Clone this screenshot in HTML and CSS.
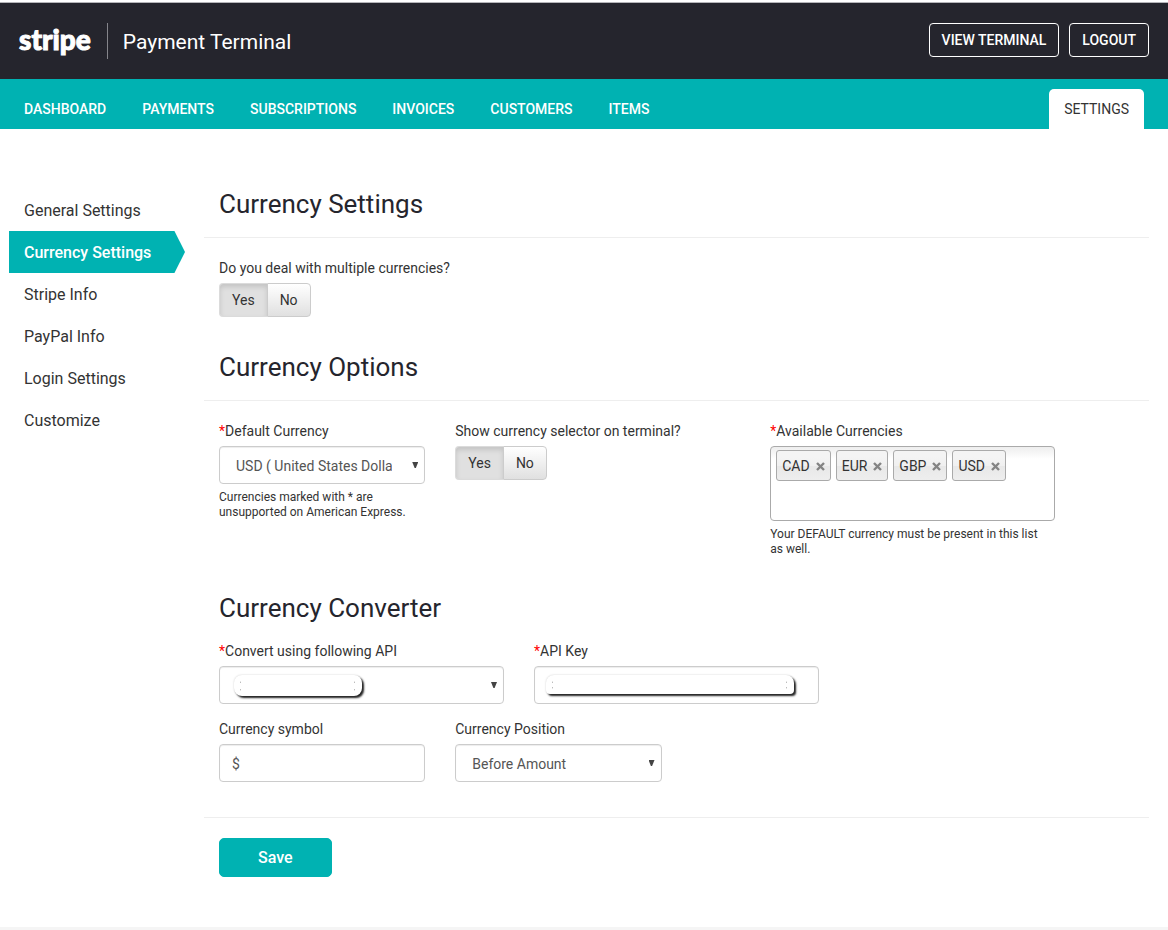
FILE: index.html
```html
<!DOCTYPE html>
<html lang="en">
<head>
<meta charset="utf-8">
<title>Currency Settings - Payment Terminal</title>
<link rel="stylesheet" href="styles.css">
</head>
<body>
<header class="topbar">
  <a class="logo" href="#">stripe</a>
  <span class="product">Payment Terminal</span>
  <div class="actions">
    <a class="outline-btn" href="#">VIEW TERMINAL</a>
    <a class="outline-btn" href="#">LOGOUT</a>
  </div>
</header>
<nav class="mainnav">
  <a href="#">DASHBOARD</a>
  <a href="#">PAYMENTS</a>
  <a href="#">SUBSCRIPTIONS</a>
  <a href="#">INVOICES</a>
  <a href="#">CUSTOMERS</a>
  <a href="#">ITEMS</a>
  <a class="tab-active" href="#">SETTINGS</a>
</nav>
<div class="layout">
  <nav class="sidenav">
    <a href="#">General Settings</a>
    <a class="current" href="#">Currency Settings</a>
    <a href="#">Stripe Info</a>
    <a href="#">PayPal Info</a>
    <a href="#">Login Settings</a>
    <a href="#">Customize</a>
  </nav>
  <main>
    <form>
      <h2 class="ruled">Currency Settings</h2>
      <fieldset class="field intro">
        <legend>Do you deal with multiple currencies?</legend>
        <div class="toggle">
          <label><input type="radio" name="multi" checked>Yes</label>
          <label><input type="radio" name="multi">No</label>
        </div>
      </fieldset>

      <h2 class="ruled">Currency Options</h2>
      <div class="grid options">
        <div class="field span3">
          <label class="caption" for="default"><span class="req">*</span>Default Currency</label>
          <div class="select"><select id="default"><option>USD ( United States Dollar )</option></select></div>
          <p class="help">Currencies marked with * are unsupported on American Express.</p>
        </div>
        <fieldset class="field span4">
          <legend>Show currency selector on terminal?</legend>
          <div class="toggle">
            <label><input type="radio" name="selector" checked>Yes</label>
            <label><input type="radio" name="selector">No</label>
          </div>
        </fieldset>
        <div class="field span4">
          <div class="caption" id="available"><span class="req">*</span>Available Currencies</div>
          <ul class="chips" aria-labelledby="available">
            <li>CAD<button type="button" aria-label="Remove CAD"><svg viewBox="0 0 9 9"><path d="M1 1l7 7M8 1L1 8"/></svg></button></li>
            <li>EUR<button type="button" aria-label="Remove EUR"><svg viewBox="0 0 9 9"><path d="M1 1l7 7M8 1L1 8"/></svg></button></li>
            <li>GBP<button type="button" aria-label="Remove GBP"><svg viewBox="0 0 9 9"><path d="M1 1l7 7M8 1L1 8"/></svg></button></li>
            <li>USD<button type="button" aria-label="Remove USD"><svg viewBox="0 0 9 9"><path d="M1 1l7 7M8 1L1 8"/></svg></button></li>
          </ul>
          <p class="help">Your DEFAULT currency must be present in this list as well.</p>
        </div>
      </div>

      <h2>Currency Converter</h2>
      <div class="grid converter">
        <div class="field span4">
          <label class="caption" for="api"><span class="req">*</span>Convert using following API</label>
          <div class="select masked"><select id="api"><option></option></select><span class="mask mask-api"></span></div>
        </div>
        <div class="field span4">
          <label class="caption" for="key"><span class="req">*</span>API Key</label>
          <div class="masked"><input id="key" type="text"><span class="mask mask-key"></span></div>
        </div>
      </div>
      <div class="grid">
        <div class="field span3">
          <label class="caption" for="symbol">Currency symbol</label>
          <input id="symbol" type="text" value="$">
        </div>
        <div class="field span3">
          <label class="caption" for="position">Currency Position</label>
          <div class="select"><select id="position"><option>Before Amount</option></select></div>
        </div>
      </div>
      <div class="submit"><button class="save" type="submit">Save</button></div>
    </form>
  </main>
</div>
<footer class="foot"></footer>
</body>
</html>
```
FILE: styles.css
```css
* { box-sizing: border-box; }
body {
  margin: 0;
  padding-top: 2px;
  min-height: 100vh;
  display: flex;
  flex-direction: column;
  background: #fff;
  color: #333;
  font: 14px/20px Roboto, "Liberation Sans", sans-serif;
}
a { text-decoration: none; color: inherit; }
h2, p, ul, fieldset { margin: 0; padding: 0; border: 0; }

.topbar {
  display: flex;
  align-items: center;
  height: 77px;
  padding: 0 19px;
  border-top: 1px solid #b5b5b9;
  background: #25252d;
  color: #fff;
}
.logo {
  padding: 0 16px 4px 0;
  border-right: 1px solid #85858b;
  font: 900 28px/32px Lato, "Open Sans", sans-serif;
  -webkit-text-stroke: 1px #fff;
}
.product { padding: 2px 0 0 15px; font-size: 21px; line-height: 28px; }
.actions { display: flex; gap: 10px; margin-left: auto; padding-bottom: 2px; }
.outline-btn {
  padding: 6px 12px;
  border: 1px solid #fff;
  border-radius: 4px;
  font-weight: 500;
}

.mainnav {
  display: flex;
  gap: 36px;
  height: 50px;
  padding: 10px 24px 0;
  background: #00b2b2;
  color: #fff;
  font-weight: 500;
  line-height: 40px;
}
.tab-active {
  margin-left: auto;
  padding: 0 15px;
  border-radius: 5px 5px 0 0;
  background: #fff;
  color: #333;
  font-weight: 400;
}

.layout { display: flex; padding: 60px 19px 50px 9px; }
.sidenav { flex: 0 0 195px; font-size: 16px; }
.sidenav a { display: block; width: 176px; padding: 2px 15px 0; line-height: 40px; }
.sidenav .current {
  background: #00b2b2;
  color: #fff;
  font-weight: 500;
  clip-path: polygon(0 0, 94% 0, 100% 50%, 94% 100%, 0 100%);
}

main { flex: 1; min-width: 0; }
h2 {
  padding: 0 15px;
  color: #25252d;
  font-size: 26px;
  line-height: 30px;
  font-weight: 400;
}
.ruled { margin-bottom: 20px; padding-bottom: 18px; border-bottom: 1px solid #eee; }
.intro { margin-bottom: 35px; }
.grid { display: grid; grid-template-columns: repeat(12, minmax(0, 1fr)); }
.field { min-width: 0; padding: 0 15px; }
.options { margin-bottom: 36px; }
.converter { margin: 18px 0 15px; }
.span3 { grid-column: span 3; }
.span4 { grid-column: span 4; }
.caption, legend { display: block; padding: 0; margin-bottom: 5px; }
.req { color: #f00; }
.help { margin-top: 6px; padding-right: 8px; font-size: 12px; line-height: 15px; }

input[type="text"], select {
  display: block;
  width: 100%;
  height: 38px;
  padding: 2px 12px 0;
  border: 1px solid #ccc;
  border-radius: 4px;
  background: #fff;
  box-shadow: inset 0 1px 1px rgba(0, 0, 0, .075);
  color: #555;
  font: inherit;
}
select { appearance: none; padding: 2px 32px 0 16px; }
.select, .masked { position: relative; }
.select::after {
  content: "";
  position: absolute;
  top: 16px;
  right: 7px;
  width: 6px;
  height: 6px;
  background: #444;
  clip-path: polygon(0 0, 100% 0, 60% 100%, 40% 100%);
  pointer-events: none;
}
.mask {
  position: absolute;
  top: 9px;
  left: 15px;
  height: 21px;
  border-radius: 8px;
  background: #fff;
  box-shadow: 2px 2px 2px #222, 0 0 2px #ccc;
}
.mask::after {
  content: "";
  position: absolute;
  inset: 5px 7px 4px 6px;
  border-radius: 4px;
  background:
    linear-gradient(#fff, #fff) center / calc(100% - 2px) 100% no-repeat,
    linear-gradient(#fff, #fff) center / 100% calc(100% - 6px) no-repeat,
    #aaa;
}
.mask-api { width: 128px; }
.mask-key { left: 12px; width: 248px; height: 19px; border-radius: 8px 8px 4px 4px; }

.toggle { display: flex; }
.toggle label {
  padding: 6px 12px;
  border: 1px solid #ccc;
  border-radius: 0 4px 4px 0;
  background: linear-gradient(#fff, #e0e0e0);
  cursor: pointer;
}
.toggle label:first-child { border-color: #dbdbdb; border-right: 0; border-radius: 4px 0 0 4px; }
.toggle label:has(:checked) { background: #e0e0e0; box-shadow: inset 0 3px 5px rgba(0, 0, 0, .125); }
.toggle input { position: absolute; opacity: 0; pointer-events: none; }

.chips {
  display: flex;
  flex-wrap: wrap;
  align-content: flex-start;
  gap: 5px;
  min-height: 75px;
  padding: 3px 5px;
  border: 1px solid #aaa;
  border-radius: 4px;
  background: linear-gradient(#eee, #fff 12px);
  list-style: none;
}
.chips li {
  display: flex;
  align-items: center;
  gap: 6px;
  height: 31px;
  padding: 1px 5px 0;
  border: 1px solid #aaa;
  border-radius: 3px;
  background: linear-gradient(#f4f4f4 20%, #f0f0f0 50%, #e8e8e8 52%, #eee);
}
.chips button { display: flex; padding: 0; border: 0; background: none; cursor: pointer; }
.chips svg { width: 9px; height: 9px; stroke: #848484; stroke-width: 2.4; fill: none; }

.submit { margin-top: 35px; padding: 20px 15px 0; border-top: 1px solid #eee; }
.save {
  display: block;
  padding: 8px 38px;
  border: 1px solid #00b2b2;
  border-radius: 5px;
  background: #00b2b2;
  color: #fff;
  font: 500 16px/21px Roboto, sans-serif;
  cursor: pointer;
}
.foot { margin-top: auto; height: 3px; background: #f5f5f5; }
```
